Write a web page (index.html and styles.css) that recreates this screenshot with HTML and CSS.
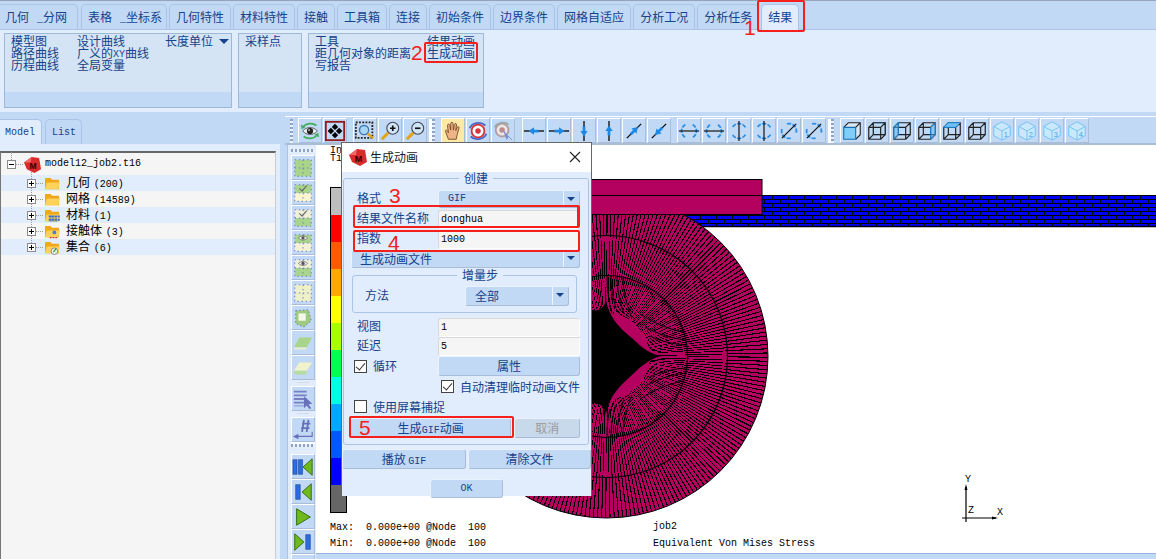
FILE: index.html
```html
<!DOCTYPE html>
<html lang="zh">
<head>
<meta charset="utf-8">
<title>生成动画</title>
<link rel="stylesheet" href="styles.css">
</head>
<body>
<svg class="sprite" xmlns="http://www.w3.org/2000/svg">
  <defs>
    <symbol id="eye" viewBox="0 0 24 24"><path d="M4 12c4-5 12-5 16 0c-4 5-12 5-16 0z" fill="#e8eef0" stroke="#555"/><circle cx="12" cy="12" r="3.4" fill="#222"/><circle cx="11" cy="11" r="1" fill="#ddd"/><path d="M4 8c4-5 11-5 15-2" fill="none" stroke="#3fae5a" stroke-width="1.8"/><path d="M20 16c-4 5-11 5-15 2" fill="none" stroke="#3fae5a" stroke-width="1.8"/><path d="M2 5l1 5l4-2zM22 19l-1-5l-4 2z" fill="#3fae5a"/></symbol>
    <symbol id="fit" viewBox="0 0 24 24"><rect x="2" y="2" width="20" height="20" fill="none" stroke="#8f1d1d" stroke-width="2"/><path d="M12 4l3.500 3.500l-3.500 3.500l-3.500-3.500zM12 20l3.500-3.500l-3.500-3.500l-3.500 3.500zM4 12l3.500-3.500l3.500 3.500l-3.500 3.500zM20 12l-3.500-3.500l-3.500 3.500l3.500 3.500z" fill="#000"/></symbol>
    <symbol id="zone" viewBox="0 0 24 24"><rect x="2" y="2.500" width="18" height="17" fill="none" stroke="#222" stroke-width="2" stroke-dasharray="2 1.500"/><circle cx="11" cy="11" r="5" fill="#a8d6f2" stroke="#3b78b5" stroke-width="1.500"/><path d="M15 15l6 5" stroke="#e2a41c" stroke-width="2.500"/></symbol>
    <symbol id="zin" viewBox="0 0 24 24"><circle cx="15" cy="9" r="6.500" fill="#cfe6f8" stroke="#445" stroke-width="1.200"/><path d="M12 9h6M15 6v6" stroke="#111" stroke-width="1.800"/><path d="M10 14l-7 7" stroke="#e2a41c" stroke-width="3.400"/></symbol>
    <symbol id="zout" viewBox="0 0 24 24"><circle cx="15" cy="9" r="6.500" fill="#cfe6f8" stroke="#445" stroke-width="1.200"/><path d="M12 9h6" stroke="#111" stroke-width="1.800"/><path d="M10 14l-7 7" stroke="#e2a41c" stroke-width="3.400"/></symbol>
    <symbol id="hand" viewBox="0 0 24 24"><path d="M7 21l-3-8c-1-2 1-3 2-1l1 2l-1-8c0-2 2-2 2.500 0l1 5l0-7c0-2 2.500-2 2.500 0l.5 7l1-6c.5-2 2.500-1.500 2.300.5l-.8 6l1.500-3.500c1-1.500 2.500-.5 2 1l-2 7l-1 5z" fill="#eeb387" stroke="#7a4a25"/></symbol>
    <symbol id="tgt" viewBox="0 0 24 24"><circle cx="12" cy="12" r="7" fill="#fff" stroke="#d8343a" stroke-width="2"/><circle cx="12" cy="12" r="3" fill="#d8343a"/><path d="M3 9c2-6 12-8 17-3M21 15c-2 6-12 8-17 3" fill="none" stroke="#4a64c4" stroke-width="2"/></symbol>
    <symbol id="tgt2" viewBox="0 0 24 24"><circle cx="11" cy="11" r="7" fill="#e8e8e8" stroke="#b79a9a" stroke-width="2"/><circle cx="11" cy="11" r="3" fill="#c08a8a"/><path d="M3 8c2-5 11-7 15-3" fill="none" stroke="#9aa" stroke-width="2"/><path d="M13 12l3 9l2-3l4 4" fill="#7d8fd0" stroke="#7d8fd0"/></symbol>
    <g id="ar"><path d="M1 12h22" stroke="#111" stroke-width="1.500"/><path d="M6 12l6-4v2.500h5v3h-5v2.500z" fill="#1e88e5"/></g>
    <symbol id="a1" viewBox="0 0 24 24"><use href="#ar"/></symbol>
    <symbol id="a2" viewBox="0 0 24 24"><use href="#ar" transform="rotate(180 12 12)"/></symbol>
    <symbol id="a3" viewBox="0 0 24 24"><use href="#ar" transform="rotate(-90 12 12)"/></symbol>
    <symbol id="a4" viewBox="0 0 24 24"><use href="#ar" transform="rotate(90 12 12)"/></symbol>
    <symbol id="a5" viewBox="0 0 24 24"><use href="#ar" transform="rotate(135 12 12)"/></symbol>
    <symbol id="a6" viewBox="0 0 24 24"><use href="#ar" transform="rotate(-45 12 12)"/></symbol>
    <g id="ro"><path d="M8 5a8 8 0 0 0 0 14M16 5a8 8 0 0 1 0 14" fill="none" stroke="#2b8fe8" stroke-width="2" stroke-dasharray="4.500 1.500"/><path d="M1 12h22" stroke="#111" stroke-width="1.300"/></g>
    <symbol id="r1" viewBox="0 0 24 24"><use href="#ro"/></symbol>
    <symbol id="r2" viewBox="0 0 24 24"><use href="#ro" transform="rotate(180 12 12)"/></symbol>
    <symbol id="r3" viewBox="0 0 24 24"><use href="#ro" transform="rotate(90 12 12)"/></symbol>
    <symbol id="r5" viewBox="0 0 24 24"><use href="#ro" transform="rotate(-45 12 12)"/></symbol>
    <g id="wire"><path d="M3 8h13v13H3zM8 3h13v13H8zM3 8l5-5M16 8l5-5M3 21l5-5M16 21l5-5" fill="none" stroke="#222" stroke-width="1.300"/></g>
    <symbol id="c1" viewBox="0 0 24 24"><path d="M3 8l5-5h13v13l-5 5M16 8l5-5" fill="#dbe8f2" stroke="#222" stroke-width="1.200"/><path d="M3 8h13v13H3z" fill="#7fcdf8" stroke="#1a6db0" stroke-width="1.200"/></symbol>
    <symbol id="c2" viewBox="0 0 24 24"><path d="M8 3h13v13H8z" fill="#bcd9f2" stroke="#2b8fe8"/><use href="#wire"/></symbol>
    <symbol id="c3" viewBox="0 0 24 24"><use href="#wire"/><path d="M3 8v13l5-5V3z" fill="#5fb4ef" fill-opacity=".5" stroke="#1a8ae0"/></symbol>
    <symbol id="c4" viewBox="0 0 24 24"><use href="#wire"/><path d="M16 8v13l5-5V3z" fill="#5fb4ef" fill-opacity=".5" stroke="#1a8ae0"/></symbol>
    <symbol id="c5" viewBox="0 0 24 24"><use href="#wire"/><path d="M3 8h13l5-5H8z" fill="#6cc0f3" stroke="#1a8ae0"/></symbol>
    <symbol id="c6" viewBox="0 0 24 24"><use href="#wire"/></symbol>
    <g id="iso"><path d="M12 2l9 5v10l-9 5l-9-5V7z" fill="#c9e8fb" stroke="#6ec0f4"/><path d="M3 7l9 5l9-5M12 12v10" fill="none" stroke="#6ec0f4"/></g>
    <symbol id="i1" viewBox="0 0 24 24"><use href="#iso"/><text x="14" y="19" class="isot">1</text></symbol>
    <symbol id="i2" viewBox="0 0 24 24"><use href="#iso"/><text x="14" y="19" class="isot">2</text></symbol>
    <symbol id="i3" viewBox="0 0 24 24"><use href="#iso"/><text x="14" y="19" class="isot">3</text></symbol>
    <symbol id="i4" viewBox="0 0 24 24"><use href="#iso"/><text x="14" y="19" class="isot">4</text></symbol>
    <g id="pg"><path d="M3 3h18v18H3zM12 3v18M3 12h18" fill="none" stroke="#6674c9" stroke-width="1" stroke-dasharray="1.500 3"/></g>
    <symbol id="p1" viewBox="0 0 24 24"><rect x="3" y="3" width="18" height="18" fill="#a9d48c"/><use href="#pg"/></symbol>
    <symbol id="p2" viewBox="0 0 24 24"><rect x="3" y="3" width="18" height="9" fill="#a9d48c"/><rect x="3" y="12" width="18" height="9" fill="#fbf6cf"/><use href="#pg"/><path d="M8 7l3 3l5-6" fill="none" stroke="#666" stroke-width="1.200"/></symbol>
    <symbol id="p3" viewBox="0 0 24 24"><rect x="3" y="3" width="18" height="9" fill="#f0f0d6"/><rect x="3" y="12" width="18" height="9" fill="#a9d48c"/><use href="#pg"/><path d="M8 7l3 3l5-6" fill="none" stroke="#666" stroke-width="1.200"/></symbol>
    <symbol id="p4" viewBox="0 0 24 24"><rect x="3" y="3" width="18" height="9" fill="#a9d48c"/><rect x="3" y="12" width="18" height="9" fill="#f4f2d4"/><use href="#pg"/><path d="M7 6.500c3-3 7-3 10 0c-3 3-7 3-10 0z" fill="#eee" stroke="#666" stroke-width=".8"/><circle cx="12" cy="6.500" r="1.800" fill="#555"/></symbol>
    <symbol id="p5" viewBox="0 0 24 24"><rect x="3" y="3" width="18" height="9" fill="#f0f0d6"/><rect x="3" y="12" width="18" height="9" fill="#a9d48c"/><use href="#pg"/><path d="M7 7c3-3 7-3 10 0c-3 3-7 3-10 0z" fill="#eee" stroke="#666" stroke-width=".8"/><circle cx="12" cy="7" r="1.800" fill="#555"/></symbol>
    <symbol id="p6" viewBox="0 0 24 24"><rect x="3" y="3" width="18" height="18" fill="#eef0c8"/><use href="#pg"/></symbol>
    <symbol id="p7" viewBox="0 0 24 24"><path d="M4 4l14-1l3 12l-8 7l-9-4z" fill="#9ecb80" stroke="#6674c9" stroke-dasharray="1.500 2.500"/><path d="M7 7h8v8H7z" fill="#f4f8e8"/></symbol>
    <symbol id="p8" viewBox="0 0 24 24"><path d="M8 6h14l-6 11H2z" fill="#a9d48c"/><path d="M2 17h14l-1 2H3z" fill="#e8efd2"/></symbol>
    <symbol id="p9" viewBox="0 0 24 24"><path d="M8 6h14l-6 9H2z" fill="#f2f2cc"/><path d="M2 15h14l-1 4H3z" fill="#b4dc9c"/></symbol>
    <symbol id="sel" viewBox="0 0 24 24"><path d="M2 3h14v2H2zM2 7h14v2H2zM2 11h14v2H2zM2 15h11v2H2zM2 19h11v1H2z" fill="#7a7fc2"/><path d="M13 9l9 8l-4 1l3 4l-2 1l-3-4l-3 3z" fill="#6770bb"/></symbol>
    <symbol id="hash" viewBox="0 0 24 24"><path d="M11 5h9M10 10h9M13 1l-2 13M18 1l-2 13" stroke="#6770bb" stroke-width="2" fill="none"/><path d="M22 14v5H6" fill="none" stroke="#6770bb" stroke-width="1.200"/><path d="M1 19l6-3v6z" fill="#6770bb"/></symbol>
    <symbol id="pb1" viewBox="0 0 24 24"><path d="M1 4h4.500v16H1zM7 4h4.500v16H7z" fill="#2d6ce0" stroke="#143c8c" stroke-width=".6"/><path d="M22 3v18L12 12z" fill="#6fb81e" stroke="#2e6a0c"/></symbol>
    <symbol id="pb2" viewBox="0 0 24 24"><path d="M4 4h5v16H4z" fill="#2d6ce0" stroke="#143c8c" stroke-width=".6"/><path d="M21 3v18L11 12z" fill="#6fb81e" stroke="#2e6a0c"/></symbol>
    <symbol id="pb3" viewBox="0 0 24 24"><path d="M5 3v18l15-9z" fill="#6fb81e" stroke="#2e6a0c"/></symbol>
    <symbol id="pb4" viewBox="0 0 24 24"><path d="M3 3v18l10-9z" fill="#6fb81e" stroke="#2e6a0c"/><path d="M15 4h5v16h-5z" fill="#2d6ce0" stroke="#143c8c" stroke-width=".6"/></symbol>
    <symbol id="logo" viewBox="0 0 18 18"><path d="M0 7l8-6l8 1l2 12l-7 4l-8-4z" fill="#d92b2b"/><path d="M0 7l8-6l-1 6z" fill="#ef6a6a"/><text x="9.500" y="14" class="logot">M</text></symbol>
    <symbol id="fold" viewBox="0 0 16 16"><path d="M0 14V2h6l1.500 2H15v10z" fill="#f0a818"/><path d="M0 14l2-7h14l-2 7z" fill="#fdd25a"/></symbol>
    <symbol id="foldm" viewBox="0 0 16 16"><use href="#fold"/><path d="M4 9h12M4 12.500h12M6 8v7M9 8v7M12 8v7" stroke="#3a6fc4" stroke-width="2" stroke-dasharray="2.200 1"/></symbol>
    <symbol id="foldc" viewBox="0 0 16 16"><use href="#fold"/><circle cx="10" cy="9" r="2" fill="#4a7fd0"/><path d="M5 14.500h2M8 14.500h2M11 14.500h2" stroke="#c33" stroke-width="1.500"/></symbol>
    <symbol id="folds" viewBox="0 0 16 16"><use href="#fold"/><circle cx="10" cy="12" r="3.500" fill="#eee" stroke="#888"/><path d="M9 13l3-4" stroke="#3a3" stroke-width="1.400"/></symbol>
    <pattern id="mesh" x="0" y="195" width="16" height="8" patternUnits="userSpaceOnUse"><rect width="16" height="8" fill="#0000ff"/><rect width="16" height="1" fill="#000"/><rect y="4" width="16" height="1" fill="#000"/><rect x="4" width="1" height="4" fill="#000"/><rect x="12" y="4" width="1" height="4" fill="#000"/></pattern>
  </defs>
</svg>

<div class="app">
  <nav class="tabs">
    <span class="tab tab-first">几何<i class="sp"></i><span class="lt">_</span>分网</span>
    <span class="tab tab-wide">表格<i class="sp"></i><span class="lt">_</span>坐标系</span>
    <span class="tab">几何特性</span>
    <span class="tab">材料特性</span>
    <span class="tab">接触</span>
    <span class="tab">工具箱</span>
    <span class="tab">连接</span>
    <span class="tab">初始条件</span>
    <span class="tab">边界条件</span>
    <span class="tab">网格自适应</span>
    <span class="tab">分析工况</span>
    <span class="tab">分析任务</span>
    <span class="tab tab-on">结果</span>
  </nav>

  <section class="ribbon">
    <div class="rgroup rg1">
      <div class="rcol rc1"><span>模型图</span><span>路径曲线</span><span>历程曲线</span></div>
      <div class="rcol rc2"><span>设计曲线</span><span>广义的<b class="lt">XY</b>曲线</span><span>全局变量</span></div>
      <div class="rcol rc3"><span>长度单位<i class="rtri"></i></span></div>
    </div>
    <div class="rgroup rg2">
      <div class="rcol"><span>采样点</span></div>
    </div>
    <div class="rgroup rg3">
      <div class="rcol rc4"><span>工具</span><span>距几何对象的距离</span><span>写报告</span></div>
      <div class="rcol rc5"><span>结果动画</span><span>生成动画</span></div>
    </div>
  </section>

  <div class="work">
    <aside class="left">
      <div class="ltabs">
        <span class="ltab ltab-on">Model</span>
        <span class="ltab">List</span>
      </div>
      <div class="lbody">
        <div class="tree">
          <div class="troot">
            <i class="exp exp-root"></i>
            <svg class="tlogo"><use href="#logo"/></svg>
            <span class="tname">model12_job2.t16</span>
          </div>
          <div class="trow alt"><i class="exp plus"></i><svg class="tfold"><use href="#fold"/></svg><span class="ttext">几何 <span class="lt">(200)</span></span></div>
          <div class="trow"><i class="exp plus"></i><svg class="tfold"><use href="#fold"/></svg><span class="ttext">网格 <span class="lt">(14589)</span></span></div>
          <div class="trow alt"><i class="exp plus"></i><svg class="tfold"><use href="#foldm"/></svg><span class="ttext">材料 <span class="lt">(1)</span></span></div>
          <div class="trow"><i class="exp plus"></i><svg class="tfold"><use href="#foldc"/></svg><span class="ttext">接触体 <span class="lt">(3)</span></span></div>
          <div class="trow alt"><i class="exp plus"></i><svg class="tfold"><use href="#folds"/></svg><span class="ttext">集合 <span class="lt">(6)</span></span></div>
        </div>
      </div>
    </aside>

    <main class="main">
      <div class="toolbar">
        <i class="grip"></i>
        <div class="tg tg-m5">
          <span class="tb"><svg><use href="#eye"/></svg></span>
          <span class="tb"><svg><use href="#fit"/></svg></span>
        </div>
        <div class="tg tg-m6">
          <span class="tb"><svg><use href="#zone"/></svg></span>
          <span class="tb"><svg><use href="#zin"/></svg></span>
          <span class="tb"><svg><use href="#zout"/></svg></span>
        </div>
        <i class="grip grip-sep"></i>
        <div class="tg tg-m6">
          <span class="tb tb-on"><svg><use href="#hand"/></svg></span>
          <span class="tb"><svg><use href="#tgt"/></svg></span>
          <span class="tb"><svg><use href="#tgt2"/></svg></span>
        </div>
        <div class="tg tg-m7">
          <span class="tb"><svg><use href="#a1"/></svg></span>
          <span class="tb"><svg><use href="#a2"/></svg></span>
          <span class="tb"><svg><use href="#a3"/></svg></span>
          <span class="tb"><svg><use href="#a4"/></svg></span>
          <span class="tb"><svg><use href="#a5"/></svg></span>
          <span class="tb"><svg><use href="#a6"/></svg></span>
        </div>
        <div class="tg tg-m6">
          <span class="tb"><svg><use href="#r1"/></svg></span>
          <span class="tb"><svg><use href="#r2"/></svg></span>
          <span class="tb"><svg><use href="#r3"/></svg></span>
          <span class="tb"><svg><use href="#r3"/></svg></span>
          <span class="tb"><svg><use href="#r5"/></svg></span>
          <span class="tb"><svg><use href="#r5"/></svg></span>
        </div>
        <i class="grip grip-sep"></i>
        <div class="tg tg-m6">
          <span class="tb"><svg><use href="#c1"/></svg></span>
          <span class="tb"><svg><use href="#c2"/></svg></span>
          <span class="tb"><svg><use href="#c3"/></svg></span>
          <span class="tb"><svg><use href="#c4"/></svg></span>
          <span class="tb"><svg><use href="#c5"/></svg></span>
          <span class="tb"><svg><use href="#c6"/></svg></span>
          <span class="tb"><svg><use href="#i1"/></svg></span>
          <span class="tb"><svg><use href="#i2"/></svg></span>
          <span class="tb"><svg><use href="#i3"/></svg></span>
          <span class="tb"><svg><use href="#i4"/></svg></span>
        </div>
      </div>

      <div class="mbody">
        <div class="vbar">
          <i class="hgrip"></i>
          <span class="tb"><svg><use href="#p1"/></svg></span>
          <span class="tb"><svg><use href="#p2"/></svg></span>
          <span class="tb"><svg><use href="#p3"/></svg></span>
          <span class="tb"><svg><use href="#p4"/></svg></span>
          <span class="tb"><svg><use href="#p5"/></svg></span>
          <span class="tb"><svg><use href="#p6"/></svg></span>
          <span class="tb"><svg><use href="#p7"/></svg></span>
          <span class="tb"><svg><use href="#p8"/></svg></span>
          <span class="tb"><svg><use href="#p9"/></svg></span>
          <i class="vsep"></i>
          <span class="tb"><svg><use href="#sel"/></svg></span>
          <i class="vsep"></i>
          <span class="tb"><svg><use href="#hash"/></svg></span>
          <i class="hgrip hgrip-sep"></i>
          <span class="tb"><svg><use href="#pb1"/></svg></span>
          <span class="tb"><svg><use href="#pb2"/></svg></span>
          <span class="tb"><svg><use href="#pb3"/></svg></span>
          <span class="tb"><svg><use href="#pb4"/></svg></span>
          <span class="tb"></span>
        </div>
        <div class="vcol">
          <div class="canvas">
            <svg class="scene" viewBox="316 145 840 408" xmlns="http://www.w3.org/2000/svg">
              <rect x="670" y="195" width="486" height="31" fill="url(#mesh)" shape-rendering="crispEdges"/>
              <path d="M670 226.500h486" stroke="#000" stroke-width="1.500"/>
              <circle cx="606.500" cy="356.500" r="161.500" fill="#b4005f"/>
              <g shape-rendering="crispEdges" fill="none">
                <circle cx="606.500" cy="356.500" r="141" stroke="#000" stroke-width="40" pathLength="240" stroke-dasharray=".3 .7"/>
                <circle cx="606.500" cy="356.500" r="101" stroke="#000" stroke-width="40" pathLength="240" stroke-dasharray=".34 .66"/>
                <circle cx="606.500" cy="356.500" r="62" stroke="#000" stroke-width="38" pathLength="240" stroke-dasharray=".45 .55"/>
                <circle cx="606.500" cy="356.500" r="58" stroke="#b4005f" stroke-width="36" stroke-dasharray="1 2.500"/>
              </g>
              <g id="flow" fill="none" stroke="#000" stroke-width="1">
                <path d="M686 345C672 344 660 341 650 336"/><path d="M685 340C670 338 658 334 645 327"/><path d="M683 332C668 329 654 323 640 314"/>
                <path d="M607 276C607 288 608 296 610 304"/><path d="M611 276C611 290 613 298 616 308"/><path d="M617 276C617 290 620 302 624 314"/><path d="M623 278C623 292 627 306 632 318"/>
              </g>
              <use href="#flow" transform="matrix(1 0 0 -1 0 713)"/>
              <path d="M592 310C600 312 606 306 606 298C608 318 622 330 632 338C642 348 650 354 661 356C650 359 642 365 632 375C622 384 608 396 606 416C606 408 600 402 592 404Z" fill="#000"/>
              <circle cx="606.500" cy="356.500" r="121" fill="none" stroke="#000" stroke-width="1.200"/>
              <circle cx="606.500" cy="356.500" r="81" fill="none" stroke="#000" stroke-width="1.200"/>
              <circle cx="606.500" cy="356.500" r="161.500" fill="none" stroke="#000"/>
              <rect x="480" y="179.500" width="282" height="35" fill="#b4005f" stroke="#000"/>
              <path d="M480 195.500h282" stroke="#000"/>
              <path d="M966 522V487M962 518h34" stroke="#000" stroke-width="1.200" fill="none"/>
              <path d="M966 484l-1.500 6h3zM998 518l-6-1.500v3z" fill="#000"/>
            </svg>
            <div class="ctext ct-inc">Inc:
Time:</div>
            <div class="scale">
              <i class="s1"></i><i class="s2"></i><i class="s3"></i><i class="s4"></i><i class="s5"></i><i class="s6"></i><i class="s7"></i><i class="s8"></i><i class="s9"></i><i class="s10"></i><i class="s11"></i><i class="s12"></i>
            </div>
            <div class="ctext ct-max">Max:  0.000e+00 @Node  100</div>
            <div class="ctext ct-min">Min:  0.000e+00 @Node  100</div>
            <div class="ctext ct-job">job2</div>
            <div class="ctext ct-eq">Equivalent Von Mises Stress</div>
            <div class="ctext ax-y">Y</div>
            <div class="ctext ax-z">Z</div>
            <div class="ctext ax-x">X</div>
          </div>
          <div class="scrollbar"></div>
        </div>
      </div>
    </main>
  </div>

  <div class="dialog">
    <header class="dtitle">
      <svg class="dlogo"><use href="#logo"/></svg>
      <span class="dname">生成动画</span>
      <svg class="dclose" viewBox="0 0 12 12"><path d="M1 1l10 10M11 1L1 11" stroke="#222" stroke-width="1.100"/></svg>
    </header>
    <fieldset class="fs fs-main">
      <legend class="lg lg-main">创建</legend>
      <div class="frow"><label>格式</label><div class="combo"><span class="cval cval-lat lt">GIF</span><i class="carrow"></i></div></div>
      <div class="frow"><label>结果文件名称</label><div class="inp inp-short lt">donghua</div></div>
      <div class="frow"><label>指数</label><div class="inp inp-short lt">1000</div></div>
      <div class="combo combo-full"><span class="cval">生成动画文件</span><i class="carrow"></i></div>
      <fieldset class="fs fs-sub">
        <legend class="lg lg-sub">增量步</legend>
        <div class="frow frow-sub"><label>方法</label><div class="combo"><span class="cval cval-mid">全部</span><i class="carrow"></i></div></div>
      </fieldset>
      <div class="frow frow-top"><label>视图</label><div class="inp lt">1</div></div>
      <div class="frow frow-19"><label>延迟</label><div class="inp lt">5</div></div>
      <div class="frow"><label class="chk"><i class="box on"></i>循环</label><div class="btn">属性</div></div>
      <div class="frow frow-auto"><label class="chk chk-auto"><i class="box on"></i>自动清理临时动画文件</label></div>
      <div class="frow frow-single"><label class="chk"><i class="box"></i>使用屏幕捕捉</label></div>
      <div class="brow"><div class="btn btn-gen">生成<span class="lt">GIF</span>动画</div><div class="btn btn-off">取消</div></div>
    </fieldset>
    <div class="drow">
      <div class="btn btn-play">播放 <span class="lt">GIF</span></div>
      <div class="btn btn-clear">清除文件</div>
    </div>
    <div class="dok"><div class="btn btn-ok lt">OK</div></div>
  </div>

  <i class="mark m1"></i><i class="mark m2"></i><i class="mark m3"></i><i class="mark m4"></i><i class="mark m5"></i>
  <span class="num n1">1</span><span class="num n2">2</span><span class="num n3">3</span><span class="num n4">4</span><span class="num n5">5</span>
</div>
</body>
</html>
```
FILE: styles.css
```css
* { box-sizing: border-box; }
html, body { margin: 0; padding: 0; }
body { width: 1156px; height: 559px; overflow: hidden; background: #c2d9f5; font: 12px/14px "Noto Sans CJK SC", "Liberation Sans", sans-serif; color: #15428b; }
i { display: block; font-style: normal; }
.sprite { position: absolute; width: 0; height: 0; }
.isot { font: 8px "Liberation Sans", sans-serif; fill: #3fa2ea; }
.logot { font: bold 9px "Liberation Sans", sans-serif; fill: #300; text-anchor: middle; }
.lt { font: 10px/14px "Liberation Mono", monospace; }

.app { position: relative; width: 1156px; height: 559px; display: flex; flex-direction: column; overflow: hidden; }

/* ribbon tabs */
.tabs { height: 30px; flex: none; display: flex; gap: 2px; padding-top: 3px; background: #c2d9f5; border-top: 1px solid #94a5ba; border-bottom: 1px solid #a9c4e6; }
.tab { height: 26px; padding: 0 6px; line-height: 24px; border: 1px solid #a9c4e6; border-bottom: 0; border-radius: 5px 5px 0 0; white-space: nowrap; }
.tab .lt { line-height: 24px; }
.tab-first { padding: 0 11px 0 5px; border-left: 0; border-radius: 0 5px 0 0; width: 78px; }
.tab-wide { padding: 0 6px; width: 86px; margin-left: 1px; }
.tab-on { background: #e1edfc; }
.sp { display: inline-block; width: 8px; }

/* ribbon body */
.ribbon { height: 82px; flex: none; background: #e1edfc; padding: 3px 0 0 4px; display: flex; gap: 6px; align-items: flex-start; }
.rgroup { height: 75px; border: 1px solid #9db9d8; display: flex; padding: 1px 0 0 6px; background: linear-gradient(#d4e4f4 0, #d4e4f4 58px, #c2d9f5 58px); }
.rg1 { width: 228px; }
.rg2 { width: 64px; }
.rg3 { width: 176px; }
.rcol { display: flex; flex-direction: column; }
.rcol span { height: 12px; line-height: 12px; white-space: nowrap; display: flex; align-items: center; }
.rcol .lt { line-height: 12px; font-weight: 400; margin-top: 3px; }
.rc1 { width: 66px; }
.rc2 { width: 88px; }
.rc4 { width: 112px; }
.rtri { width: 0; height: 0; margin-left: 6px; border: 5px solid transparent; border-top: 5px solid #15428b; border-bottom: 0; }

/* work area */
.work { flex: 1; min-height: 0; display: flex; background: #c2d9f5; }
.left { width: 285px; flex: none; display: flex; flex-direction: column; padding-top: 7px; }
.ltabs { height: 25px; display: flex; gap: 3px; flex: none; }
.ltab { font: 10px/26px "Liberation Mono", monospace; padding: 0 7px 0 5px; border: 1px solid #a9c4e6; border-bottom: 0; border-radius: 5px 5px 0 0; letter-spacing: 0; }
.ltab-on { background: #e1edfc; border-left: 0; border-radius: 0 5px 0 0; width: 42px; }
.ltab:not(.ltab-on) { width: 37px; padding: 0 6px; }
.lbody { width: 280px; flex: 1; background: #e1edfc; padding-top: 7px; min-height: 0; }
.tree { width: 276px; height: 100%; background: #f5f5f5; border-top: 2px solid #666; border-left: 1px solid #777; border-right: 1px solid #ccc; color: #000; position: relative; }
.troot { height: 22px; display: flex; align-items: center; padding-left: 6px; }
.tlogo { width: 17px; height: 17px; margin-left: 8px; }
.tname { font: 10px/14px "Liberation Mono", monospace; margin-left: 4px; }
.trow { height: 16px; display: flex; align-items: center; padding-left: 26px; }
.trow.alt { background: #e1edfc; }
.exp { width: 9px; height: 9px; border: 1px solid #8a8a8a; background: #fff linear-gradient(#000, #000) center / 5px 1px no-repeat; flex: none; position: relative; }
.plus { background-image: linear-gradient(#000, #000), linear-gradient(#000, #000); background-size: 5px 1px, 1px 5px; background-position: center, center; background-repeat: no-repeat; }
.exp::after { content: ""; position: absolute; left: 8px; top: 3px; width: 7px; border-top: 1px dotted #999; }
.exp::before { content: ""; position: absolute; left: 3px; top: -9px; height: 8px; border-left: 1px dotted #999; }
.plus::before { top: -8px; height: 7px; }
.tfold { width: 15px; height: 15px; margin-left: 9px; flex: none; }
.ttext { margin-left: 6px; line-height: 14px; white-space: pre; }
.ttext .lt { margin-left: 1px; }

/* main */
.main { flex: 1; min-width: 0; display: flex; flex-direction: column; }
.toolbar { height: 33px; flex: none; display: flex; align-items: flex-start; padding: 6px 0 0 5px; border-bottom: 2px solid #a9bdd6; background: linear-gradient(#c2d9f5 4px, #fff 4px, #fff 5px, #c2d9f5 5px); }
.grip { width: 3px; height: 24px; margin-top: 1px; background: repeating-linear-gradient(#8fa4c4 0, #8fa4c4 2px, #eaf2fd 2px, #eaf2fd 4px); }
.grip-sep { margin-left: 5px; box-shadow: -3px 0 0 #fff; }
.tg { display: flex; gap: 1px; }
.tg-m5 { margin-left: 5px; }
.tg-m6 { margin-left: 6px; }
.tg-m7 { margin-left: 7px; }
.tb { width: 24px; height: 25px; flex: none; display: flex; align-items: center; justify-content: center; background: #c2d9f5; border: 1px solid; border-color: #fff #a9bdd6 #a9bdd6 #fff; }
.tb svg { width: 22px; height: 22px; }
.tb-on { background: #fde9a6; }

.mbody { flex: 1; min-height: 0; display: flex; }
.vbar { width: 29px; flex: none; overflow: hidden; margin-left: 2px; padding: 0 2px 0 3px; background: #e1edfc; display: flex; flex-direction: column; align-items: flex-start; border-left: 1px solid #a9c4e6; }
.vbar .tb { height: 25px; }
.hgrip { width: 24px; height: 3px; margin: 4px 0 3px; flex: none; background: repeating-linear-gradient(90deg, #8fa4c4 0, #8fa4c4 2px, #eaf2fd 2px, #eaf2fd 4px); }
.hgrip-sep { margin: 2px 0 7px; box-shadow: 0 -2px 0 #fff; }
.vsep { width: 24px; height: 6px; flex: none; position: relative; }
.vsep::after { content: ""; position: absolute; left: 6px; right: 6px; top: 2px; border-top: 1px solid #d4dbe6; }

.vcol { flex: 1; min-width: 0; display: flex; flex-direction: column; }
.canvas { height: 408px; flex: none; background: #fff; position: relative; overflow: hidden; }
.scrollbar { flex: 1; background: #c2d9f5; border-top: 1px solid #94b4dd; }
.scene { position: absolute; left: 0; top: 0; width: 840px; height: 408px; }
.ctext { position: absolute; font: 10px/8px "Liberation Mono", monospace; color: #000; white-space: pre; }
.ct-inc { left: 14px; top: 2px; }
.ct-max { left: 14px; top: 379px; }
.ct-min { left: 14px; top: 395px; }
.ct-job { left: 337px; top: 378px; }
.ct-eq { left: 337px; top: 395px; }
.ax-y { left: 649px; top: 331px; }
.ax-z { left: 652px; top: 362px; }
.ax-x { left: 681px; top: 364px; }
.scale { position: absolute; left: 14px; top: 42px; width: 17px; height: 326px; border: 1px solid #000; display: flex; flex-direction: column; }
.scale i { flex: 1; }
.s1 { background: #bdbdbd; }
.s2 { background: #ff0000; }
.s3 { background: #ff5a00; }
.s4 { background: #ffa800; }
.s5 { background: #ffff00; }
.s6 { background: #a8ff00; }
.s7 { background: #00ff50; }
.s8 { background: #00ffe0; }
.s9 { background: #00a8ff; }
.s10 { background: #0058ff; }
.s11 { background: #0000ff; }
.s12 { background: #666666; }

/* dialog */
.dialog { position: absolute; left: 341px; top: 142px; width: 251px; height: 354px; background: #e1edfc; border: 1px solid #666; border-bottom: 0; }
.dtitle { height: 29px; background: #fff; display: flex; align-items: center; padding: 0 0 2px 7px; color: #1a1a1a; }
.dlogo { width: 18px; height: 18px; }
.dname { margin-left: 3px; }
.dclose { width: 12px; height: 12px; margin-left: auto; margin-right: 10px; }
.fs { margin: 0; min-width: 0; border: 1px solid #a9c4e6; border-radius: 3px; }
.fs-main { width: 246px; margin: -1px 0 0 1px; padding: 4px 8px 6px; }
.fs-sub { width: 225px; padding: 4px 7px 6px 12px; }
.lg { padding: 0 5px; line-height: 14px; }
.lg-main { margin-left: 107px; }
.lg-sub { margin-left: 92px; }
.frow { height: 20px; display: grid; grid-template-columns: 86px 1fr; align-items: center; }
.frow label { padding: 0 0 3px 5px; white-space: nowrap; }
.frow-sub { grid-template-columns: 100px 1fr; }
.frow-sub label { padding-left: 0; }
.frow-sub .combo { width: 104px; height: 20px; }
.frow-top { margin-top: 4px; }
.frow-19 { height: 19px; }
.frow-auto { height: 19px; display: flex; margin-top: 1px; }
.frow-single { height: 19px; display: flex; margin-top: 1px; }
.chk { display: flex; align-items: center; gap: 6px; }
.frow label.chk { padding: 0 0 0 2px; }
.frow label.chk-auto { padding-left: 89px; }
.box { width: 13px; height: 13px; background: #fff; border: 1px solid #444; flex: none; position: relative; }
.box.on::after { content: ""; position: absolute; left: 3px; top: 0; width: 4px; height: 8px; border: solid #333; border-width: 0 1.500px 1.500px 0; transform: rotate(40deg); }
.combo { height: 18px; display: flex; background: #c2d9f5; border: 1px solid; border-color: #e9f2fd #a9bdd6 #a9bdd6 #e9f2fd; border-radius: 3px; align-items: center; }
.combo-full { width: 229px; height: 19px; margin-left: -1px; }
.cval { flex: 1; padding-left: 8px; white-space: nowrap; }
.cval-lat { padding-left: 9px; }
.cval-mid { padding-left: 9px; }
.carrow { width: 16px; height: 100%; flex: none; border-left: 1px solid #eef5fe; position: relative; }
.carrow::after { content: ""; position: absolute; left: 3px; top: 6px; border: 4px solid transparent; border-top: 4px solid #15428b; border-bottom: 0; border-left-width: 4px; }
.inp { height: 19px; background: #f5f5f5; border: 1px solid; border-color: #d8d8d8 #fff #fff #d8d8d8; border-radius: 3px; color: #000; padding-left: 2px; line-height: 17px; }
.inp-short { margin-right: 1px; }
.btn { height: 20px; background: #c2d9f5; border: 1px solid; border-color: #e9f2fd #a9bdd6 #a9bdd6 #e9f2fd; border-radius: 3px; text-align: center; line-height: 17px; white-space: nowrap; }
.btn .lt { line-height: 17px; }
.brow { display: flex; gap: 3px; margin-top: 2px; margin-left: -2px; }
.btn-gen { width: 162px; }
.btn-off { width: 66px; color: #9a9a9a; background: #c9d9ec; }
.drow { display: flex; gap: 2px; margin-top: 4px; }
.btn-play { width: 124px; }
.btn-clear { width: 123px; }
.dok { display: flex; justify-content: center; margin-top: 10px; }
.btn-ok { width: 73px; height: 19px; line-height: 17px; }

/* annotations */
.mark { position: absolute; border: 2.500px solid #f5201c; border-radius: 2px; }
.m1 { left: 757px; top: 0; width: 48px; height: 32px; }
.m2 { left: 424px; top: 42px; width: 54px; height: 21px; }
.m3 { left: 353px; top: 205px; width: 227px; height: 23px; border-right-width: 3px; }
.m4 { left: 353px; top: 230px; width: 227px; height: 22px; }
.m5 { left: 349px; top: 416px; width: 165px; height: 22px; }
.num { position: absolute; font: 21px/22px "Liberation Sans", sans-serif; color: #f5201c; }
.n1 { left: 744px; top: 17px; }
.n2 { left: 411px; top: 42px; }
.n3 { left: 389px; top: 185px; }
.n4 { left: 388px; top: 232px; }
.n5 { left: 359px; top: 417px; }
```
